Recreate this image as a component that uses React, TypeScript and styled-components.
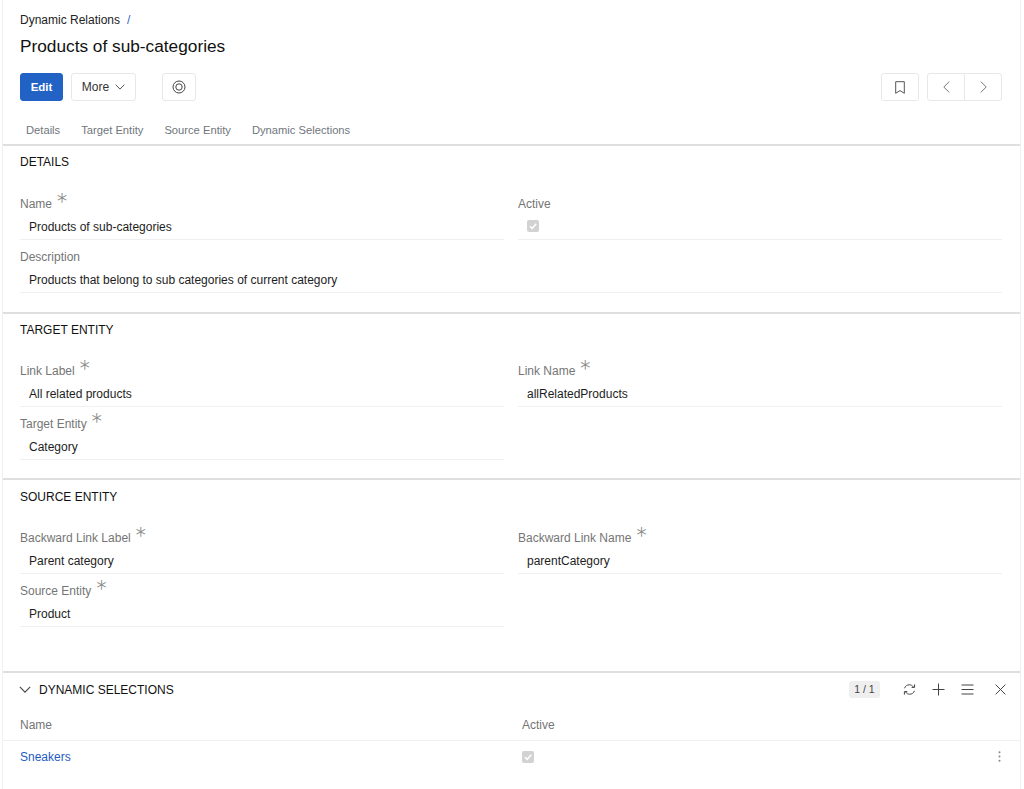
import React from "react";
import styled, { createGlobalStyle } from "styled-components";

const GlobalStyle = createGlobalStyle`
  html, body {
    margin: 0;
    padding: 0;
    background: #fff;
    font-family: "Liberation Sans", Arial, sans-serif;
    font-size: 12px;
    color: #1f1f1f;
  }
`;

const Page = styled.div`
  width: 1024px;
  height: 789px;
  box-sizing: border-box;
  padding: 0 3px 0 2px;
  overflow: hidden;
`;

const Sheet = styled.div`
  height: 789px;
  box-sizing: border-box;
  border-left: 1px solid #f1f1f1;
  border-right: 1px solid #f1f1f1;
`;

const Header = styled.header`
  padding: 13px 18px 0 17px;
`;

const Crumbs = styled.div`
  display: flex;
  gap: 7px;
  height: 14px;
  line-height: 14px;
  font-size: 12px;
  color: #222;
`;

const CrumbSep = styled.span`
  color: #2f67c4;
`;

const Title = styled.h1`
  margin: 8px 0 0;
  font-size: 17.25px;
  line-height: 22px;
  font-weight: 400;
  color: #111;
`;

const Toolbar = styled.div`
  display: flex;
  align-items: center;
  margin-top: 16px;
  height: 28px;
`;

const Button = styled.button<{ $primary?: boolean; $width: number; $gap?: number }>`
  display: inline-flex;
  align-items: center;
  justify-content: center;
  gap: 6px;
  box-sizing: border-box;
  width: ${(p) => p.$width}px;
  height: 28px;
  margin-right: ${(p) => p.$gap ?? 0}px;
  padding: 0;
  border: 1px solid ${(p) => (p.$primary ? "#2362c5" : "#e8e8e8")};
  border-radius: 3px;
  background: ${(p) => (p.$primary ? "#2362c5" : "#fff")};
  color: ${(p) => (p.$primary ? "#fff" : "#333")};
  font-family: inherit;
  font-size: ${(p) => (p.$primary ? 11.5 : 12)}px;
  font-weight: ${(p) => (p.$primary ? 700 : 400)};
`;

const Spacer = styled.div`
  flex: 1;
`;

const Pager = styled.div`
  display: flex;
  height: 28px;
  box-sizing: border-box;
  border: 1px solid #e8e8e8;
  border-radius: 3px;
`;

const PagerCell = styled.span<{ $divided?: boolean }>`
  display: flex;
  align-items: center;
  justify-content: center;
  width: 36px;
  border-left: ${(p) => (p.$divided ? "1px solid #e8e8e8" : "none")};
`;

const Tabs = styled.nav`
  display: flex;
  gap: 21px;
  margin-top: 22px;
  padding-left: 6px;
  height: 15px;
  line-height: 15px;
  font-size: 11.2px;
  color: #6f767c;
`;

const Section = styled.section<{ $height: number; $first?: boolean; $pad: number }>`
  box-sizing: border-box;
  height: ${(p) => p.$height}px;
  margin-top: ${(p) => (p.$first ? 6 : 0)}px;
  padding: ${(p) => p.$pad}px 18px 0 17px;
  border-top: 2px solid #dfdfdf;
`;

const SectionTitle = styled.h2`
  margin: 0;
  height: 14px;
  line-height: 14px;
  font-size: 12px;
  font-weight: 400;
  color: #111;
`;

const FieldGrid = styled.div<{ $top: number }>`
  display: grid;
  grid-template-columns: 484px 484px;
  column-gap: 14px;
  margin-top: ${(p) => p.$top}px;
`;

const Field = styled.div<{ $full?: boolean }>`
  grid-column: ${(p) => (p.$full ? "1 / -1" : "auto")};
  height: 53px;
  display: flex;
  flex-direction: column;
  justify-content: flex-end;
`;

const Label = styled.label`
  display: flex;
  height: 18px;
  line-height: 18px;
  font-size: 12px;
  color: #757575;
`;

const Star = styled.span`
  font-family: "Inter", sans-serif;
  font-weight: 200;
  font-size: 24px;
  line-height: 18px;
  margin-left: 4px;
  transform: translateY(-1px);
  color: #8a8a8a;
`;

const Value = styled.div`
  box-sizing: border-box;
  height: 27px;
  padding: 7px 9px 0;
  line-height: 15px;
  font-size: 12px;
  color: #1d1d1d;
  border-bottom: 1px solid #f0f0f0;
`;

const Check = styled.span`
  display: flex;
  align-items: center;
  justify-content: center;
  width: 12px;
  height: 12px;
  border-radius: 2px;
  background: #d2d2d2;
`;

const Panel = styled.section`
  border-top: 2px solid #dfdfdf;
`;

const PanelHead = styled.div`
  display: flex;
  align-items: center;
  height: 33px;
  padding: 0 14px 0 16px;
`;

const PanelTitle = styled.h2`
  margin: 0 0 0 8px;
  font-size: 12px;
  font-weight: 400;
  color: #111;
  flex: 1;
`;

const Count = styled.span`
  box-sizing: border-box;
  width: 31px;
  height: 17px;
  margin-right: 23px;
  line-height: 17px;
  text-align: center;
  font-size: 10.5px;
  color: #444;
  background: #efefef;
  border-radius: 3px;
`;

const IconRow = styled.div`
  display: flex;
  align-items: center;
  gap: 16px;
`;

const CloseWrap = styled.span`
  display: flex;
  margin-left: 21px;
`;

const TableRow = styled.div<{ $head?: boolean }>`
  display: grid;
  grid-template-columns: 502px 1fr 24px;
  align-items: center;
  box-sizing: border-box;
  padding: ${(p) => (p.$head ? 4 : 0)}px 19px 0 17px;
  height: ${(p) => (p.$head ? 35 : 31)}px;
  border-bottom: ${(p) => (p.$head ? "1px solid #f0f0f0" : "none")};
  color: ${(p) => (p.$head ? "#757575" : "inherit")};
  font-size: 12px;
`;

const RowLink = styled.a`
  color: #1f5bc4;
  text-decoration: none;
`;

const RowAction = styled.span`
  display: flex;
  justify-content: flex-end;
`;

const CheckMark = () => (
  <svg width="10" height="10" viewBox="0 0 10 10" fill="none" stroke="#fff" strokeWidth="1.6">
    <path d="M2 5.2 4.2 7.4 8.2 2.8" />
  </svg>
);

const ChevronDown = ({ size = 10 }: { size?: number }) => (
  <svg width={size} height={size * 0.6} viewBox="0 0 10 6" fill="none" stroke="#444" strokeWidth="0.9">
    <path d="M.7.7 5 5.1 9.3.7" />
  </svg>
);

const Target = () => (
  <svg width="14" height="14" viewBox="0 0 14 14" fill="none" stroke="#444" strokeWidth="1">
    <circle cx="7" cy="7" r="6" />
    <circle cx="7" cy="7" r="3.2" />
  </svg>
);

const Bookmark = () => (
  <svg width="10" height="13" viewBox="0 0 10 13" fill="none" stroke="#555" strokeWidth="1">
    <path d="M.7.7h8.6v11.6L5 9.6.7 12.3z" />
  </svg>
);

const Chevron = ({ right }: { right?: boolean }) => (
  <svg width="7" height="12" viewBox="0 0 7 12" fill="none" stroke="#777" strokeWidth="1">
    <path d={right ? "M.8.6 6.2 6 .8 11.4" : "M6.2.6.8 6l5.4 5.4"} />
  </svg>
);

const Refresh = () => (
  <svg width="13" height="13" viewBox="0 0 13 13" fill="none" stroke="#444" strokeWidth="1">
    <path d="M1.6 5.2C2.2 3 4.1 1.8 6.3 1.8c1.7 0 3 .7 4.2 2.2" />
    <path d="M11.4 7.8c-.6 2.2-2.5 3.4-4.7 3.4-1.7 0-3-.7-4.2-2.2" />
    <path d="M11.6 1.4v3h-3M1.4 11.6v-3h3" />
  </svg>
);

const Plus = () => (
  <svg width="13" height="13" viewBox="0 0 13 13" stroke="#444" strokeWidth="1">
    <path d="M6.5.5v12M.5 6.5h12" />
  </svg>
);

const Menu = () => (
  <svg width="13" height="11" viewBox="0 0 13 11" stroke="#444" strokeWidth="1">
    <path d="M.5 1h12M.5 5.5h12M.5 10h12" />
  </svg>
);

const Close = () => (
  <svg width="11" height="11" viewBox="0 0 11 11" stroke="#444" strokeWidth="1">
    <path d="M.6.6l9.8 9.8M10.4.6.6 10.4" />
  </svg>
);

const Dots = () => (
  <svg width="3" height="11" viewBox="0 0 3 11" fill="#888">
    <circle cx="1.5" cy="1.2" r="1" />
    <circle cx="1.5" cy="5.5" r="1" />
    <circle cx="1.5" cy="9.8" r="1" />
  </svg>
);

type FieldDef = { label: string; value: string; required?: boolean; full?: boolean; check?: boolean };

const sections: {
  title: string;
  height: number;
  pad: number;
  top: number;
  first?: boolean;
  fields: FieldDef[];
}[] = [
  {
    title: "DETAILS",
    height: 168,
    pad: 9,
    top: 18,
    first: true,
    fields: [
      { label: "Name", value: "Products of sub-categories", required: true },
      { label: "Active", value: "", check: true },
      { label: "Description", value: "Products that belong to sub categories of current category", full: true },
    ],
  },
  {
    title: "TARGET ENTITY",
    height: 166,
    pad: 9,
    top: 17,
    fields: [
      { label: "Link Label", value: "All related products", required: true },
      { label: "Link Name", value: "allRelatedProducts", required: true },
      { label: "Target Entity", value: "Category", required: true },
    ],
  },
  {
    title: "SOURCE ENTITY",
    height: 193,
    pad: 10,
    top: 17,
    fields: [
      { label: "Backward Link Label", value: "Parent category", required: true },
      { label: "Backward Link Name", value: "parentCategory", required: true },
      { label: "Source Entity", value: "Product", required: true },
    ],
  },
];

export default function App() {
  return (
    <Page>
      <GlobalStyle />
      <Sheet>
        <Header>
          <Crumbs>
            <span>Dynamic Relations</span>
            <CrumbSep>/</CrumbSep>
          </Crumbs>
          <Title>Products of sub-categories</Title>
          <Toolbar>
            <Button $primary $width={43} $gap={8}>Edit</Button>
            <Button $width={65} $gap={26}>
              More <ChevronDown />
            </Button>
            <Button $width={34}>
              <Target />
            </Button>
            <Spacer />
            <Button $width={38} $gap={8}>
              <Bookmark />
            </Button>
            <Pager>
              <PagerCell><Chevron /></PagerCell>
              <PagerCell $divided><Chevron right /></PagerCell>
            </Pager>
          </Toolbar>
          <Tabs>
            <span>Details</span>
            <span>Target Entity</span>
            <span>Source Entity</span>
            <span>Dynamic Selections</span>
          </Tabs>
        </Header>

        {sections.map((section) => (
          <Section key={section.title} $height={section.height} $first={section.first} $pad={section.pad}>
            <SectionTitle>{section.title}</SectionTitle>
            <FieldGrid $top={section.top}>
              {section.fields.map((field) => (
                <Field key={field.label} $full={field.full}>
                  <Label>
                    {field.label}
                    {field.required && <Star>*</Star>}
                  </Label>
                  {field.check ? (
                    <Value>
                      <Check><CheckMark /></Check>
                    </Value>
                  ) : (
                    <Value>{field.value}</Value>
                  )}
                </Field>
              ))}
            </FieldGrid>
          </Section>
        ))}

        <Panel>
          <PanelHead>
            <ChevronDown size={12} />
            <PanelTitle>DYNAMIC SELECTIONS</PanelTitle>
            <Count>1 / 1</Count>
            <IconRow>
              <Refresh />
              <Plus />
              <Menu />
            </IconRow>
            <CloseWrap><Close /></CloseWrap>
          </PanelHead>
          <TableRow $head>
            <span>Name</span>
            <span>Active</span>
            <span />
          </TableRow>
          <TableRow>
            <RowLink href="#">Sneakers</RowLink>
            <Check><CheckMark /></Check>
            <RowAction><Dots /></RowAction>
          </TableRow>
        </Panel>
      </Sheet>
    </Page>
  );
}
